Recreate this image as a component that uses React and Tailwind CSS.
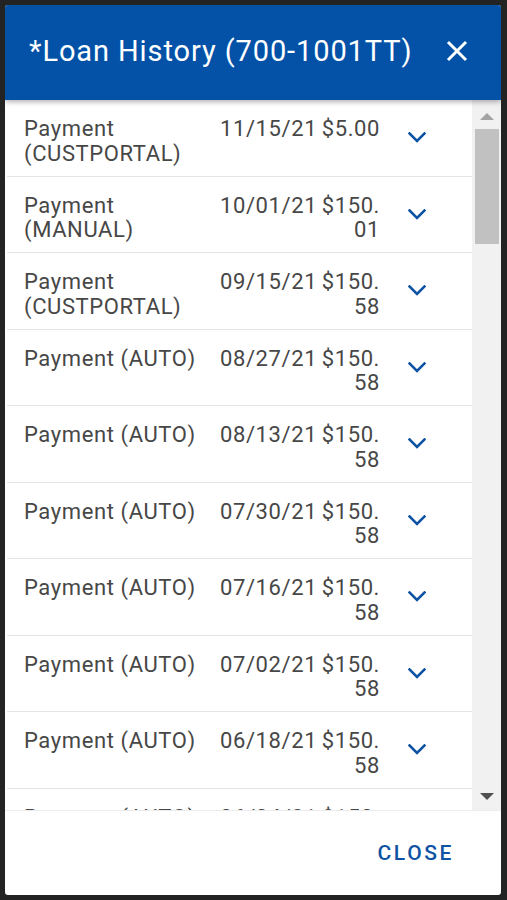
import React from "react";

const rows = [
  ["Payment (CUSTPORTAL)", "11/15/21", "$5.00"],
  ["Payment (MANUAL)", "10/01/21", "$150.01"],
  ["Payment (CUSTPORTAL)", "09/15/21", "$150.58"],
  ["Payment (AUTO)", "08/27/21", "$150.58"],
  ["Payment (AUTO)", "08/13/21", "$150.58"],
  ["Payment (AUTO)", "07/30/21", "$150.58"],
  ["Payment (AUTO)", "07/16/21", "$150.58"],
  ["Payment (AUTO)", "07/02/21", "$150.58"],
  ["Payment (AUTO)", "06/18/21", "$150.58"],
  ["Payment (AUTO)", "06/04/21", "$150.58"],
  ["Payment (AUTO)", "05/21/21", "$150.58"],
];

function Chevron() {
  return (
    <svg width="18" height="11" viewBox="0 0 18 11" fill="none">
      <path d="M1.5 1.5 L9 9 L16.5 1.5" stroke="#0d52a3" strokeWidth="2.6" strokeLinecap="square" />
    </svg>
  );
}

export default function App() {
  return (
    <div className="w-[507px] h-[900px] bg-[#232323] pt-[5px] pl-[5px] pr-[6px] pb-[5px] font-['Roboto',sans-serif]">
      <div className="w-[496px] h-[890px] bg-white rounded-[3px] overflow-hidden flex flex-col">
        <div className="relative z-10 h-[95px] shrink-0 bg-[#0352a8] flex items-center pl-[24px] shadow-[0_2px_5px_rgba(0,0,0,0.3)]">
          <div className="text-white text-[29px] leading-none tracking-[0.9px] w-[417px] -mt-[3px]">*Loan History (700-1001TT)</div>
          <svg width="22" height="22" viewBox="0 0 22 22" className="-mt-[3px]">
            <path d="M2 2 L20 20 M20 2 L2 20" stroke="white" strokeWidth="3" />
          </svg>
        </div>
        <div className="flex-1 flex min-h-0">
          <div className="flex-1 overflow-hidden">
            {rows.map((r, i) => (
              <div key={i} className="h-[76.5px] border-b border-[#e4e4e4] ml-[2px] flex items-start pl-[17px] pt-[17px] text-[22px] leading-[24.5px] tracking-[0.6px] text-[#474747]">
                <div className="w-[196px] pr-[6px] shrink-0">{r[0]}</div>
                <div className="w-[100px] shrink-0">{r[1]}</div>
                <div className="w-[60px] shrink-0 text-right break-all">{r[2]}</div>
                <div className="ml-[28px] self-center -mt-[17px] flex">
                  <Chevron />
                </div>
              </div>
            ))}
          </div>
          <div className="w-[29px] shrink-0 bg-[#f1f1f1] flex flex-col">
            <div className="h-[29px] flex items-end justify-center pb-[9px]">
              <div className="w-0 h-0 border-l-[7px] border-r-[7px] border-b-[7px] border-l-transparent border-r-transparent border-b-[#a3a3a3]" />
            </div>
            <div className="h-[115px] bg-[#c1c1c1] ml-[3px] mr-[2px]" />
            <div className="flex-1" />
            <div className="h-[29px] flex items-start justify-center pt-[12px]">
              <div className="w-0 h-0 border-l-[7px] border-r-[7px] border-t-[7px] border-l-transparent border-r-transparent border-t-[#505050]" />
            </div>
          </div>
        </div>
        <div className="h-[85px] shrink-0 flex items-center justify-end pr-[47px] border-t border-[#ececec]">
          <span className="text-[#0d52a3] text-[21px] font-medium tracking-[2.6px] leading-none">CLOSE</span>
        </div>
      </div>
    </div>
  );
}
